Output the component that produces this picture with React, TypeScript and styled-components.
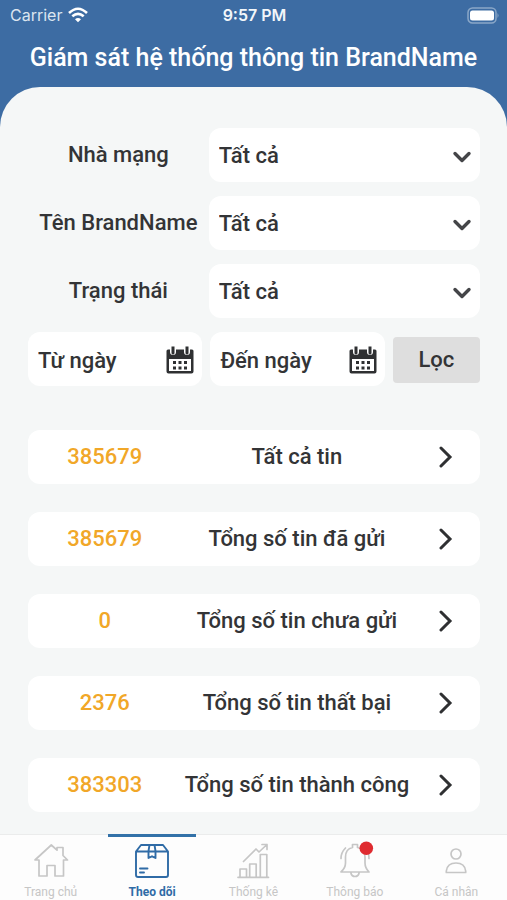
import React, { useState } from "react";
import styled, { createGlobalStyle } from "styled-components";

const GlobalStyle = createGlobalStyle`
  *, *::before, *::after { box-sizing: border-box; }
  body { margin: 0; background: #3d6ca3; }
  button, input, select { font: inherit; color: inherit; border: 0; padding: 0; margin: 0; }
  ul { list-style: none; margin: 0; padding: 0; }
`;

const Page = styled.div`
  display: flex;
  flex-direction: column;
  min-height: 100vh;
  background: #3d6ca3;
  color: #333436;
  font-family: Roboto, "Noto Sans", sans-serif;
  font-size: 22px;
  line-height: 28px;
  font-weight: 500;
`;

const StatusBar = styled.div`
  display: grid;
  grid-template-columns: 1fr auto 1fr;
  align-items: center;
  height: 30px;
  padding: 0 8px 0 10px;
  color: #f2f6fa;
  font-family: Inter, sans-serif;
  font-size: 16px;
  line-height: 20px;
`;

const Carrier = styled.span`
  display: flex;
  align-items: center;
  gap: 6px;
  font-weight: 400;
  color: #dbe5f0;
`;

const Clock = styled.time`
  font-weight: 600;
`;

const BatteryIcon = styled.svg`
  justify-self: end;
`;

const Title = styled.h1`
  margin: 0;
  padding: 13px 16px 14px;
  color: #fff;
  text-align: center;
  font-size: 25px;
  line-height: 30px;
  font-weight: 500;
`;

const Sheet = styled.main`
  flex: 1;
  display: flex;
  flex-direction: column;
  gap: 44px;
  padding: 41px 27px 22px 28px;
  border-radius: 40px 40px 0 0;
  background: #f5f7f7;
`;

const Filters = styled.form`
  display: flex;
  flex-direction: column;
  gap: 14px;
`;

const FilterRow = styled.div`
  display: grid;
  grid-template-columns: 2fr 3fr;
  align-items: center;
`;

const FilterLabel = styled.label`
  text-align: center;
  white-space: nowrap;
`;

const SelectBox = styled.div`
  position: relative;
  display: flex;
`;

const Select = styled.select`
  flex: 1;
  min-width: 0;
  height: 54px;
  padding: 2px 36px 0 10px;
  border-radius: 12px;
  background: #fff;
  appearance: none;
`;

const SelectArrow = styled.svg`
  position: absolute;
  right: 8px;
  top: 22px;
  pointer-events: none;
`;

const DateRow = styled.div`
  display: grid;
  grid-template-columns: 2fr 2fr 1fr;
  align-items: center;
  gap: 8px;
`;

const DateField = styled.div`
  display: flex;
  align-items: center;
  height: 54px;
  padding: 2px 8px 0 10px;
  border-radius: 12px;
  background: #fff;
`;

const DateInput = styled.input`
  flex: 1;
  width: 0;
  min-width: 0;
  height: 30px;
  background: transparent;
  &::placeholder { color: inherit; opacity: 1; }
`;

const IconButton = styled.button`
  display: flex;
  background: transparent;
`;

const FilterButton = styled.button`
  height: 46px;
  margin-top: 2px;
  border-radius: 4px;
  background: #dedede;
`;

const Stats = styled.ul`
  display: flex;
  flex-direction: column;
  gap: 28px;
`;

const StatRow = styled.button`
  display: grid;
  grid-template-columns: minmax(0, 34fr) minmax(0, 51fr) minmax(0, 15fr);
  align-items: center;
  justify-items: center;
  width: 100%;
  height: 54px;
  border-radius: 12px;
  background: #fff;
  white-space: nowrap;
`;

const StatValue = styled.span`
  color: #f1a728;
`;

const TabBar = styled.nav`
  display: grid;
  grid-template-columns: repeat(5, 1fr);
  justify-items: center;
  height: 66px;
  border-top: 1px solid #ebecec;
  background: #fdfdfd;
`;

const Tab = styled.a<{ $active?: boolean }>`
  display: flex;
  flex-direction: column;
  align-items: center;
  gap: 6px;
  width: 88px;
  margin-top: -1px;
  padding-top: 7px;
  border-top: 3px solid ${(p) => (p.$active ? "#3271a8" : "transparent")};
  color: ${(p) => (p.$active ? "#2f6ba6" : "#c6c6c6")};
  font-size: 12px;
  line-height: 16px;
  font-weight: ${(p) => (p.$active ? 700 : 400)};
  text-decoration: none;
  white-space: nowrap;
`;

const TabIcon = styled.svg`
  display: block;
  overflow: visible;
  fill: none;
  stroke: currentColor;
  stroke-width: 1.7;
  stroke-linejoin: round;
  stroke-linecap: round;
`;

const filters = [
  { id: "network", label: "Nhà mạng" },
  { id: "brand", label: "Tên BrandName" },
  { id: "status", label: "Trạng thái" },
];

const stats = [
  { value: "385679", label: "Tất cả tin" },
  { value: "385679", label: "Tổng số tin đã gửi" },
  { value: "0", label: "Tổng số tin chưa gửi" },
  { value: "2376", label: "Tổng số tin thất bại" },
  { value: "383303", label: "Tổng số tin thành công" },
];

const tabs = [
  {
    label: "Trang chủ",
    icon: <path d="M17.3 1 1 16h4v16h8V21.5h8V32h8.5V16h4L29 11.5V3.5h-6v2.7z" />,
  },
  {
    label: "Theo dõi",
    icon: (
      <g strokeWidth="1.9">
        <path d="M6 1h22l5 6.5V31q0 2-2 2H3q-2 0-2-2V7.5zM1 7.500h32M14.500 1l-1 6v7l3.500-1.700 3.500 1.700V7l-1-6M5 24.500h7.500M5 28.500h4" />
      </g>
    ),
  },
  {
    label: "Thống kê",
    icon: (
      <path d="M2 33.300h30.500M4 33v-8h6.500v8M13.700 33V20h6.500v13M24.300 33V10.500h6.500V33M7.500 17.500 20 5l3 3 8-7.500M26 .5h5v5" />
    ),
  },
  {
    label: "Thông báo",
    icon: (
      <>
        <path d="M3 28h28q-4-4-4-9v-6q0-8-7.500-9.500V.5h-5v3Q7.500 5 7.500 13v6q0 5-4.500 9zM12.800 28.500q.7 4 4.200 4t4.200-4M3 14.500q0-6 4.500-10.500M31 14.500q0-6-3-10" />
        <circle cx="28.300" cy="4.300" r="6.800" fill="#df2b30" stroke="none" />
      </>
    ),
  },
  {
    label: "Cá nhân",
    icon: (
      <>
        <circle cx="17" cy="10" r="5" />
        <path d="M7.300 28.500h19.400v-1.500q-1-8-9.700-8t-9.700 8z" />
      </>
    ),
  },
];

function WifiIcon() {
  return (
    <svg width="20" height="16" viewBox="0 0 20 16" fill="none" stroke="#fff" strokeWidth="2.600" aria-hidden="true">
      <path d="M1 6Q10-2.500 19 6M4.300 9.300q5.700-5 11.400 0" />
      <path d="M7 12.200q3-2.500 6 0l-3 3z" fill="#fff" stroke="none" />
    </svg>
  );
}

function CalendarIcon() {
  return (
    <svg width="28" height="28" viewBox="0 0 28 28" aria-hidden="true">
      <path
        fill="#2f3032"
        fillRule="evenodd"
        d="M2 3.500h2V6a3 3 0 0 0 6 0V3.500h8V6a3 3 0 0 0 6 0V3.500h2q1.500 0 1.500 1.500v20.500q0 2-2 2h-23q-2 0-2-2V5Q.5 3.500 2 3.500zM3 13v12h22V13z"
      />
      <path
        fill="#2f3032"
        d="M5.500.5h3V7a1.500 1.500 0 0 1-3 0zM19.500.5h3V7a1.500 1.500 0 0 1-3 0zM7 15h3v3H7zM12.500 15h3v3h-3zM18 15h3v3h-3zM7 20.500h3v3H7zM12.500 20.500h3v3h-3zM18 20.500h3v3h-3z"
      />
    </svg>
  );
}

export default function App() {
  const [from, setFrom] = useState("");
  const [to, setTo] = useState("");
  const dates = [
    { label: "Từ ngày", value: from, set: setFrom },
    { label: "Đến ngày", value: to, set: setTo },
  ];

  return (
    <Page>
      <GlobalStyle />
      <StatusBar>
        <Carrier>
          Carrier
          <WifiIcon />
        </Carrier>
        <Clock>9:57 PM</Clock>
        <BatteryIcon width="32" height="17" viewBox="0 0 32 17" aria-hidden="true">
          <rect x="1" y="1" width="28" height="15" rx="4.500" fill="none" stroke="#8aa7c8" strokeWidth="1.500" />
          <rect x="3" y="3.500" width="24" height="10" rx="2.500" fill="#fff" />
          <path d="M30.500 6q2 2.500 0 5z" fill="#8aa7c8" />
        </BatteryIcon>
      </StatusBar>
      <Title>Giám sát hệ thống thông tin BrandName</Title>
      <Sheet>
        <Filters onSubmit={(e) => e.preventDefault()}>
          {filters.map((f) => (
            <FilterRow key={f.id}>
              <FilterLabel htmlFor={f.id}>{f.label}</FilterLabel>
              <SelectBox>
                <Select id={f.id}>
                  <option>Tất cả</option>
                </Select>
                <SelectArrow width="20" height="14" viewBox="0 0 20 14" fill="none" stroke="#444548" strokeWidth="3.400" strokeLinecap="round" strokeLinejoin="round" aria-hidden="true">
                  <path d="m3 3.500 7 7 7-7" />
                </SelectArrow>
              </SelectBox>
            </FilterRow>
          ))}
          <DateRow>
            {dates.map((d) => (
              <DateField key={d.label}>
                <DateInput
                  type="text"
                  aria-label={d.label}
                  placeholder={d.label}
                  value={d.value}
                  onChange={(e) => d.set(e.target.value)}
                />
                <IconButton type="button" aria-label={`Chọn ${d.label}`}>
                  <CalendarIcon />
                </IconButton>
              </DateField>
            ))}
            <FilterButton type="submit">Lọc</FilterButton>
          </DateRow>
        </Filters>
        <Stats>
          {stats.map((s) => (
            <li key={s.label}>
              <StatRow type="button">
                <StatValue>{s.value}</StatValue>
                <span>{s.label}</span>
                <svg width="16" height="22" viewBox="0 0 16 22" fill="none" stroke="#2f3032" strokeWidth="3" strokeLinecap="round" aria-hidden="true">
                  <path d="m3 2 9 9-9 9" />
                </svg>
              </StatRow>
            </li>
          ))}
        </Stats>
      </Sheet>
      <TabBar>
        {tabs.map((t, i) => (
          <Tab key={t.label} href="#" $active={i === 1} aria-current={i === 1 ? "page" : undefined}>
            <TabIcon width="34" height="34" viewBox="0 0 34 34" aria-hidden="true">
              {t.icon}
            </TabIcon>
            {t.label}
          </Tab>
        ))}
      </TabBar>
    </Page>
  );
}
